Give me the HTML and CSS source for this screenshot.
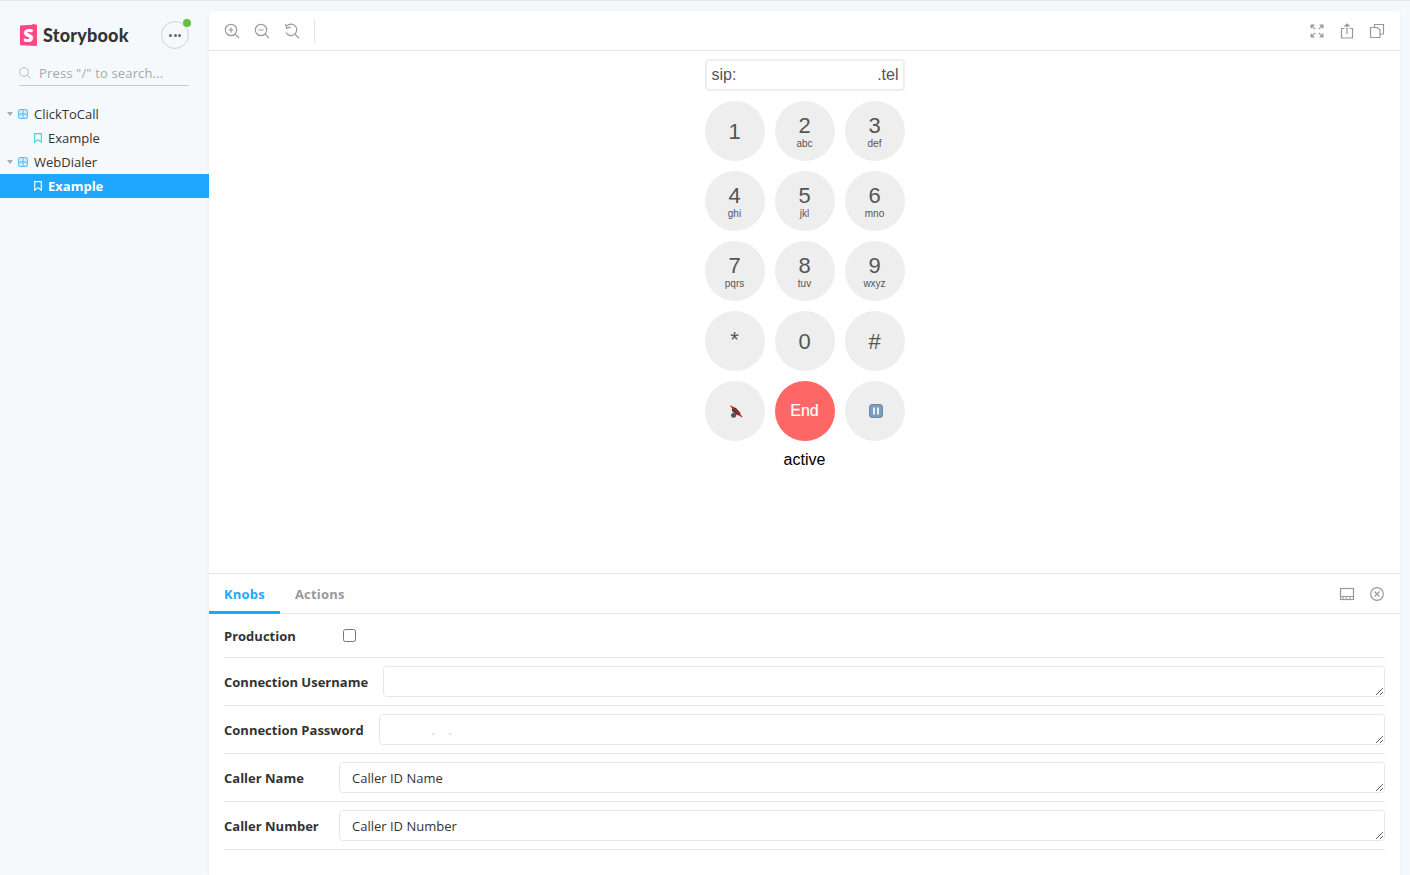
FILE: index.html
```html
<!DOCTYPE html>
<html lang="en">
<head>
    <meta charset="UTF-8">
    <title>Storybook</title>
    <link rel="stylesheet" href="styles.css">
</head>
<body>
    <aside class="sidebar">
        <div class="brand">
            <svg class="logo" width="18" height="22" viewBox="0 0 18 22">
                <path d="M1 1.5 L13.5 .8 L13.5 0 L15.5 0 L15.5 .6 L17.2 .5 Q18 .5 18 1.3 V21 Q18 22 17 22 L1.8 21.3 Q.9 21.2 .9 20.4 Z" fill="#ff4785"/>
                <text x="9.4" y="17.5" text-anchor="middle" class="logo-s">S</text>
            </svg>
            <span class="brand-name">Storybook</span>
            <span class="menu-btn">
                <span class="menu-dots"><i></i><i></i><i></i></span>
                <span class="menu-badge"></span>
            </span>
        </div>
        <div class="search">
            <svg width="12" height="12" viewBox="0 0 12 12" fill="none" stroke="#b5b9bd" stroke-width="1">
                <circle cx="5" cy="5" r="4.3"/><path d="M8.2 8.2 L11.5 11.5"/>
            </svg>
            <span>Press "/" to search...</span>
        </div>
        <nav class="tree">
            <div class="tree-row">
                <span class="caret"></span>
                <svg class="tree-icon" width="10" height="10" viewBox="0 0 10 10"><rect x=".5" y=".5" width="9" height="9" rx="1.5" fill="#cfeafd" stroke="#5fbcfa"/><path d="M5 .5 V9.5 M.5 5 H9.5" stroke="#5fbcfa"/></svg>
                ClickToCall
            </div>
            <div class="tree-row tree-leaf">
                <svg class="tree-icon" width="8" height="10" viewBox="0 0 8 10"><path d="M.7 .6 H7.3 V9.2 L4 6.6 L.7 9.2 Z" fill="none" stroke="#37d5d3" stroke-width="1.1"/></svg>
                Example
            </div>
            <div class="tree-row">
                <span class="caret"></span>
                <svg class="tree-icon" width="10" height="10" viewBox="0 0 10 10"><rect x=".5" y=".5" width="9" height="9" rx="1.5" fill="#cfeafd" stroke="#5fbcfa"/><path d="M5 .5 V9.5 M.5 5 H9.5" stroke="#5fbcfa"/></svg>
                WebDialer
            </div>
            <div class="tree-row tree-leaf selected">
                <svg class="tree-icon" width="8" height="10" viewBox="0 0 8 10"><path d="M.7 .6 H7.3 V9.2 L4 6.6 L.7 9.2 Z" fill="none" stroke="#fff" stroke-width="1.1"/></svg>
                Example
            </div>
        </nav>
    </aside>

    <main class="panel">
        <header class="toolbar">
            <div class="tools">
                <svg width="16" height="16" viewBox="0 0 16 16"><circle cx="7" cy="7" r="5.7"/><path d="M11.2 11.2 L15 15 M4.4 7 H9.6 M7 4.4 V9.6"/></svg>
                <svg width="16" height="16" viewBox="0 0 16 16"><circle cx="7" cy="7" r="5.7"/><path d="M11.2 11.2 L15 15 M4.4 7 H9.6"/></svg>
                <svg width="16" height="16" viewBox="0 0 16 16"><path d="M3 2.8 A5.7 5.7 0 1 1 2 9.5 M1.6 1 L2.6 5.2 L6.6 4.2 M11.2 11.4 L15 15"/></svg>
                <span class="tool-sep"></span>
            </div>
            <div class="tools">
                <svg width="16" height="16" viewBox="0 0 16 16"><path d="M2.5 2.5 L6.2 6.2 M13.5 2.5 L9.8 6.2 M2.5 13.5 L6.2 9.8 M13.5 13.5 L9.8 9.8"/><path class="solid" d="M1.5 1.5 H6 L1.5 6 Z M14.5 1.5 H10 L14.5 6 Z M1.5 14.5 H6 L1.5 10 Z M14.5 14.5 H10 L14.5 10 Z"/></svg>
                <svg width="16" height="16" viewBox="0 0 16 16"><path d="M5.5 5.5 H2.5 V15 H13.5 V5.5 H10.5 M8 11 V1.2 M5.5 3.5 L8 1 L10.5 3.5"/></svg>
                <svg width="16" height="16" viewBox="0 0 16 16"><path d="M5.5 4 V1.5 H14.5 V11 H11 M1.5 4.5 H8.5 L11 7 V14.5 H1.5 Z"/></svg>
            </div>
        </header>

        <section class="preview">
            <div class="dialer">
                <div class="dial-input"><span>sip:</span><span>.tel</span></div>
                <div class="keypad">
                    <div class="key"><b>1</b></div>
                    <div class="key"><b>2</b><small>abc</small></div>
                    <div class="key"><b>3</b><small>def</small></div>
                    <div class="key"><b>4</b><small>ghi</small></div>
                    <div class="key"><b>5</b><small>jkl</small></div>
                    <div class="key"><b>6</b><small>mno</small></div>
                    <div class="key"><b>7</b><small>pqrs</small></div>
                    <div class="key"><b>8</b><small>tuv</small></div>
                    <div class="key"><b>9</b><small>wxyz</small></div>
                    <div class="key key-star"><b>*</b></div>
                    <div class="key"><b>0</b></div>
                    <div class="key"><b>#</b></div>
                    <div class="key">
                        <svg class="icon-mute" width="14" height="14" viewBox="0 0 14 14">
                            <path d="M3 1.5 L7 3 L11 7.5 L12 11 L8 10 L3 6 Z" fill="#3a3a3a"/>
                            <circle cx="4.6" cy="10.2" r="2.5" fill="#555"/>
                            <path d="M1.5 .8 L13 12" stroke="#f01818" stroke-width="1.2"/>
                        </svg>
                    </div>
                    <div class="key key-end">End</div>
                    <div class="key">
                        <svg class="icon-pause" width="14" height="14" viewBox="0 0 14 14">
                            <rect x=".5" y=".5" width="13" height="13" rx="2.5" fill="#7c9cbd" stroke="#6b8bad"/>
                            <rect x="4" y="3.5" width="2" height="7" fill="#e8eef5"/>
                            <rect x="8" y="3.5" width="2" height="7" fill="#e8eef5"/>
                        </svg>
                    </div>
                </div>
                <div class="dial-status">active</div>
            </div>
        </section>

        <section class="addons">
            <div class="tabbar">
                <div class="tabs">
                    <span class="tab tab-active">Knobs</span>
                    <span class="tab">Actions</span>
                </div>
                <div class="tools">
                    <svg width="16" height="16" viewBox="0 0 16 16"><rect x="1.5" y="2.5" width="13" height="11"/><path d="M1.5 10.5 H14.5 M3 12 H5 M6.5 12 H8.5 M10 12 H12"/></svg>
                    <svg width="16" height="16" viewBox="0 0 16 16"><circle cx="8" cy="8" r="6.3"/><path d="M5.5 5.5 L10.5 10.5 M10.5 5.5 L5.5 10.5"/></svg>
                </div>
            </div>
            <form class="knobs">
                <div class="knob knob-check">
                    <label>Production</label>
                    <input type="checkbox">
                </div>
                <div class="knob">
                    <label>Connection Username</label>
                    <textarea></textarea>
                </div>
                <div class="knob">
                    <label>Connection Password</label>
                    <textarea class="secret">.    .</textarea>
                </div>
                <div class="knob">
                    <label>Caller Name</label>
                    <textarea>Caller ID Name</textarea>
                </div>
                <div class="knob">
                    <label>Caller Number</label>
                    <textarea>Caller ID Number</textarea>
                </div>
            </form>
        </section>
    </main>
</body>
</html>
```

FILE: styles.css
```css
* {
    box-sizing: border-box;
}

html, body {
    height: 100%;
}

body {
    margin: 0;
    height: 875px;
    overflow: hidden;
    display: flex;
    background: #f6f9fc;
    border-top: 1px solid #e3e6ea;
    font-family: "Open Sans", "Noto Sans", Arial, sans-serif;
    color: #333;
}

/* sidebar */
.sidebar {
    width: 209px;
    flex: none;
    padding-top: 23px;
}

.brand {
    display: flex;
    align-items: center;
    height: 22px;
    padding-left: 19px;
    position: relative;
}

.logo-s {
    font-family: "Open Sans", sans-serif;
    font-weight: 800;
    font-size: 18px;
    fill: #fff;
}

.brand-name {
    margin-left: 6px;
    font-family: Lato, sans-serif;
    font-weight: 900;
    font-size: 18px;
    letter-spacing: 0.2px;
    color: #333;
}

.menu-btn {
    position: absolute;
    left: 161px;
    top: -3px;
    width: 28px;
    height: 28px;
    border: 1px solid #cfd3d6;
    border-radius: 50%;
    display: flex;
    align-items: center;
    justify-content: center;
}

.menu-dots {
    display: flex;
    gap: 1.5px;
}

.menu-dots i {
    width: 3px;
    height: 3px;
    border-radius: 50%;
    background: #666;
}

.menu-badge {
    position: absolute;
    top: -3px;
    right: -3px;
    width: 8px;
    height: 8px;
    border-radius: 50%;
    background: #66bf3c;
}

.search {
    margin: 15px 20px 0 19px;
    height: 25px;
    padding-bottom: 1px;
    border-bottom: 1px solid #c4c7ca;
    display: flex;
    align-items: center;
    gap: 8px;
    font-size: 13px;
    letter-spacing: 0.15px;
    color: #a5a8ab;
}

.tree {
    margin-top: 16px;
}

.tree-row {
    height: 24px;
    display: flex;
    align-items: center;
    padding-left: 18px;
    font-size: 13px;
    color: #333;
    position: relative;
}

.tree-icon {
    margin-right: 6px;
    flex: none;
}

.caret {
    position: absolute;
    left: 7px;
    top: 10px;
    border-left: 3px solid transparent;
    border-right: 3px solid transparent;
    border-top: 4px solid #a8abae;
}

.tree-leaf {
    padding-left: 34px;
}

.selected {
    background: #1ea7fd;
    color: #fff;
    font-weight: 700;
}

/* main panel */
.panel {
    width: 1191px;
    flex: none;
    margin-top: 10px;
    height: 864px;
    background: #fff;
    border-radius: 4px 4px 0 0;
    box-shadow: 0 1px 5px rgba(0, 0, 0, 0.05);
    display: flex;
    flex-direction: column;
}

.toolbar {
    height: 40px;
    flex: none;
    border-bottom: 1px solid #e6e6e6;
    display: flex;
    justify-content: space-between;
    align-items: center;
    padding: 0 15px;
}

.tools {
    display: flex;
    align-items: center;
    gap: 14px;
}

.tools svg {
    fill: none;
    stroke: #999;
    stroke-width: 1.2;
}

.tools svg .solid {
    fill: #999;
    stroke: none;
}

.tool-sep {
    width: 1px;
    height: 24px;
    background: #e6e6e6;
}

/* dialer */
.preview {
    height: 522px;
    flex: none;
    display: flex;
    justify-content: center;
    padding-top: 8px;
    font-family: "Liberation Sans", Arial, sans-serif;
}

.dialer {
    width: 200px;
}

.dial-input {
    height: 32px;
    border: 2px solid #eee;
    border-radius: 4px;
    display: flex;
    justify-content: space-between;
    align-items: center;
    padding: 0 4px 0 5px;
    font-size: 16px;
    color: #555;
}

.keypad {
    margin-top: 10px;
    display: grid;
    grid-template-columns: repeat(3, 60px);
    grid-auto-rows: 60px;
    gap: 10px;
}

.key {
    border-radius: 50%;
    background: #eee;
    color: #555;
    display: flex;
    flex-direction: column;
    align-items: center;
    justify-content: center;
}

.key b {
    font-weight: 400;
    font-size: 22px;
    line-height: 25px;
}

.key small {
    font-size: 10px;
    line-height: 11px;
    margin-bottom: 1px;
}

.key-star {
    padding-bottom: 4px;
}

.key-end {
    background: #ff6666;
    color: #fff;
    font-size: 16px;
    -webkit-text-stroke: 0.2px #fff;
}

.icon-mute {
    margin-left: 2px;
    margin-top: 2px;
}

.icon-pause {
    margin-left: 3px;
}

.dial-status {
    margin-top: 10px;
    text-align: center;
    font-size: 16px;
    line-height: 18px;
    color: #000;
}

/* knobs */
.addons {
    flex: 1;
    border-top: 1px solid #e6e6e6;
}

.tabbar {
    height: 40px;
    border-bottom: 1px solid #e6e6e6;
    display: flex;
    justify-content: space-between;
    align-items: center;
    padding-right: 15px;
}

.tabs {
    display: flex;
    height: 40px;
}

.tab {
    padding: 3px 15px 0;
    display: flex;
    align-items: center;
    font-size: 13px;
    font-weight: 700;
    letter-spacing: 0.2px;
    color: #999;
    border-bottom: 3px solid transparent;
}

.tab-active {
    color: #1ea7fd;
    border-bottom-color: #1ea7fd;
}

.knobs {
    padding: 0 15px;
}

.knob {
    display: flex;
    align-items: center;
    height: 48px;
    border-bottom: 1px solid #e6e6e6;
}

.knob-check {
    height: 44px;
}

.knob label {
    min-width: 100px;
    margin-right: 15px;
    font-size: 13px;
    font-weight: 700;
    color: #333;
}

.knob input[type="checkbox"] {
    margin: 0 0 0 4px;
    width: 13px;
    height: 13px;
}

.knob textarea {
    flex: 1;
    height: 31px;
    min-width: 0;
    padding: 7px 12px;
    border: 1px solid #e6e6e6;
    border-radius: 4px;
    outline: none;
    font-family: inherit;
    font-size: 13px;
    line-height: 16px;
    color: #333;
    background: #fff;
}

.knob textarea.secret {
    padding-left: 52px;
    color: #ccc;
}
```
